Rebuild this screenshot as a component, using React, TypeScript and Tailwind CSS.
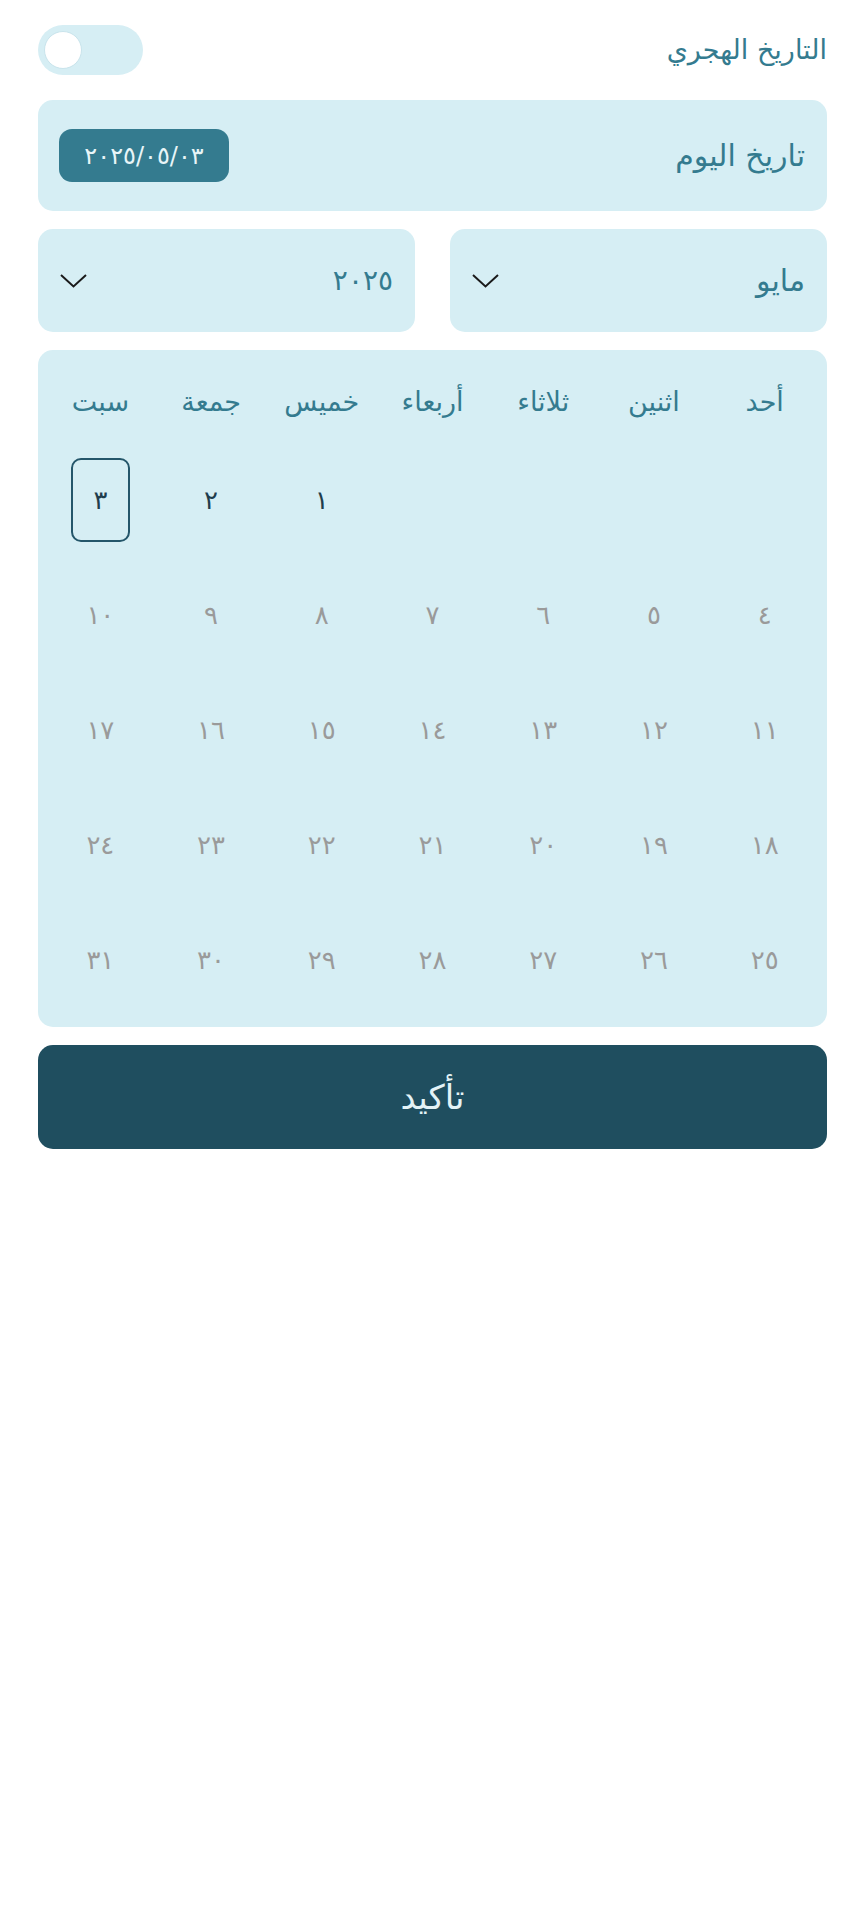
import React from 'react';

const weekDays = ['أحد', 'اثنين', 'ثلاثاء', 'أربعاء', 'خميس', 'جمعة', 'سبت'];

const toArabic = (n: number) =>
  String(n).replace(/[0-9]/g, (d) => '٠١٢٣٤٥٦٧٨٩'[Number(d)]);

const Chevron = () => (
  <svg width="27" height="14" viewBox="0 0 27 14" fill="none">
    <path d="M1 1 L13.5 12.5 L26 1" stroke="#1a1a1a" strokeWidth="2" />
  </svg>
);

const App = () => {
  // May 2025 starts on Thursday (index 4 in a Sunday-first week)
  const cells: (number | null)[] = [null, null, null, null];
  for (let d = 1; d <= 31; d++) cells.push(d);

  return (
    <div
      dir="rtl"
      className="w-[865px] min-h-[1920px] bg-white px-[38px] pt-[25px]"
      style={{ fontFamily: '"DejaVu Sans", sans-serif' }}
    >
      {/* hijri toggle */}
      <div className="flex items-center justify-between h-[50px]">
        <span className="text-[27px] font-medium text-[#347b8f]">التاريخ الهجري</span>
        <div className="w-[105px] h-[50px] rounded-full bg-[#d6eef4] flex items-center justify-end px-[6px]">
          <div className="w-[38px] h-[38px] rounded-full bg-white border border-[#c9e4ec]"></div>
        </div>
      </div>

      {/* today */}
      <div className="mt-[25px] h-[111px] rounded-[15px] bg-[#d6eef4] flex items-center justify-between pr-[22px] pl-[21px]">
        <span className="text-[30px] font-medium text-[#347b8f]">تاريخ اليوم</span>
        <div className="h-[53px] w-[170px] rounded-[13px] bg-[#347b8f] flex items-center justify-center text-[24px] text-[#e8f5f8]">
          ٢٠٢٥/٠٥/٠٣
        </div>
      </div>

      {/* month / year selects */}
      <div className="mt-[18px] grid grid-cols-2 gap-[35px]">
        <div className="h-[103px] rounded-[15px] bg-[#d6eef4] flex items-center justify-between pr-[22px] pl-[22px]">
          <span className="text-[30px] font-medium text-[#347b8f]">مايو</span>
          <Chevron />
        </div>
        <div className="h-[103px] rounded-[15px] bg-[#d6eef4] flex items-center justify-between pr-[22px] pl-[22px]">
          <span className="text-[28px] font-medium text-[#347b8f]">٢٠٢٥</span>
          <Chevron />
        </div>
      </div>

      {/* calendar */}
      <div className="mt-[18px] h-[677px] rounded-[15px] bg-[#d6eef4] px-[7px] pt-[30px]">
        <div className="grid grid-cols-7">
          {weekDays.map((d) => (
            <div key={d} className="h-[44px] flex items-center justify-center text-[27px] font-medium text-[#347b8f]">
              {d}
            </div>
          ))}
        </div>
        <div className="grid grid-cols-7 mt-[35px] gap-y-[33px]">
          {cells.map((d, i) => (
            <div key={i} className="h-[82px] flex items-center justify-center">
              {d !== null && (
                <div
                  className={
                    d === 3
                      ? 'w-[59px] h-[84px] rounded-[10px] border-2 border-[#24566a] flex items-center justify-center text-[26px] font-medium text-[#1f3d4c]'
                      : d < 3
                      ? 'text-[26px] font-medium text-[#1f3d4c]'
                      : 'text-[26px] font-medium text-[#9a9a9a]'
                  }
                >
                  {toArabic(d)}
                </div>
              )}
            </div>
          ))}
        </div>
      </div>

      {/* confirm */}
      <button className="mt-[18px] w-full h-[104px] rounded-[15px] bg-[#1f4e5f] text-[34px] font-medium text-[#e3f3f7] flex items-center justify-center">
        تأكيد
      </button>
    </div>
  );
};

export default App;
